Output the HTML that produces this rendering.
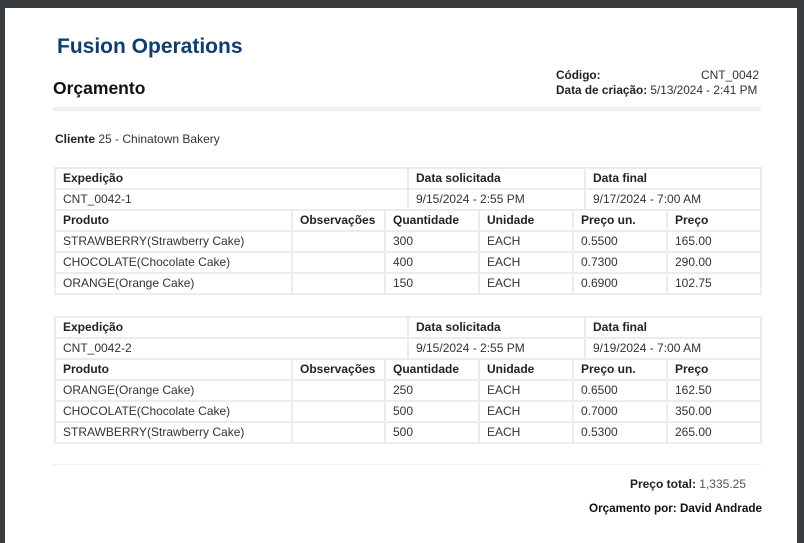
<!DOCTYPE html>
<html><head><meta charset="utf-8"><style>
*{margin:0;padding:0;box-sizing:border-box}
body{width:804px;height:543px;background:#3a3d40;position:relative;overflow:hidden;font-family:"Liberation Sans",Arial,sans-serif;color:#333}
.page{position:absolute;left:5px;top:8px;width:792px;height:535px;background:#fff}
.a{position:absolute;white-space:nowrap}
table{position:absolute;left:54px;width:706px;border-collapse:collapse;table-layout:fixed;font-size:12px}
td{border:2px solid #ececec;height:21px;padding:0 0 1px 7px;color:#333;white-space:nowrap;overflow:hidden}
.h td{font-weight:bold;color:#222}
</style></head><body>
<div class="page"></div>
<div class="a" style="left:57px;top:35px;font-size:21px;font-weight:bold;color:#0f3e6e">Fusion Operations</div>
<div class="a" style="left:53px;top:78px;font-size:17.5px;font-weight:bold;color:#111">Orçamento</div>
<div class="a" style="left:556px;top:68px;font-size:11.8px;font-weight:bold;color:#222">Código:</div>
<div class="a" style="right:45px;top:68px;font-size:12px;color:#333">CNT_0042</div>
<div class="a" style="left:556px;top:83px;font-size:11.8px;color:#333"><b style="color:#222">Data de criação:</b> 5/13/2024 - 2:41 PM</div>
<div class="a" style="left:53px;top:107px;width:708px;height:4px;background:#efefef"></div>
<div class="a" style="left:55px;top:132px;font-size:12px;color:#333"><b style="color:#222">Cliente</b> 25 - Chinatown Bakery</div>

<table style="top:167px"><colgroup><col style="width:353px"><col style="width:177px"><col style="width:176px"></colgroup>
<tr class="h"><td>Expedição</td><td>Data solicitada</td><td>Data final</td></tr>
<tr><td>CNT_0042-1</td><td>9/15/2024 - 2:55 PM</td><td>9/17/2024 - 7:00 AM</td></tr></table>
<table style="top:209px"><colgroup><col style="width:237px"><col style="width:93px"><col style="width:94px"><col style="width:94px"><col style="width:94px"><col style="width:94px"></colgroup>
<tr class="h"><td>Produto</td><td>Observações</td><td>Quantidade</td><td>Unidade</td><td>Preço un.</td><td>Preço</td></tr>
<tr><td>STRAWBERRY(Strawberry Cake)</td><td></td><td>300</td><td>EACH</td><td>0.5500</td><td>165.00</td></tr>
<tr><td>CHOCOLATE(Chocolate Cake)</td><td></td><td>400</td><td>EACH</td><td>0.7300</td><td>290.00</td></tr>
<tr><td>ORANGE(Orange Cake)</td><td></td><td>150</td><td>EACH</td><td>0.6900</td><td>102.75</td></tr></table>

<table style="top:316px"><colgroup><col style="width:353px"><col style="width:177px"><col style="width:176px"></colgroup>
<tr class="h"><td>Expedição</td><td>Data solicitada</td><td>Data final</td></tr>
<tr><td>CNT_0042-2</td><td>9/15/2024 - 2:55 PM</td><td>9/19/2024 - 7:00 AM</td></tr></table>
<table style="top:358px"><colgroup><col style="width:237px"><col style="width:93px"><col style="width:94px"><col style="width:94px"><col style="width:94px"><col style="width:94px"></colgroup>
<tr class="h"><td>Produto</td><td>Observações</td><td>Quantidade</td><td>Unidade</td><td>Preço un.</td><td>Preço</td></tr>
<tr><td>ORANGE(Orange Cake)</td><td></td><td>250</td><td>EACH</td><td>0.6500</td><td>162.50</td></tr>
<tr><td>CHOCOLATE(Chocolate Cake)</td><td></td><td>500</td><td>EACH</td><td>0.7000</td><td>350.00</td></tr>
<tr><td>STRAWBERRY(Strawberry Cake)</td><td></td><td>500</td><td>EACH</td><td>0.5300</td><td>265.00</td></tr></table>

<div class="a" style="left:53px;top:464px;width:708px;height:1px;background:#eee"></div>
<div class="a" style="right:58px;top:477px;font-size:12px;color:#555"><b style="color:#222">Preço total:</b> 1,335.25</div>
<div class="a" style="right:42px;top:502px;font-size:11.7px;font-weight:bold;color:#111">Orçamento por: David Andrade</div>
</body></html>
